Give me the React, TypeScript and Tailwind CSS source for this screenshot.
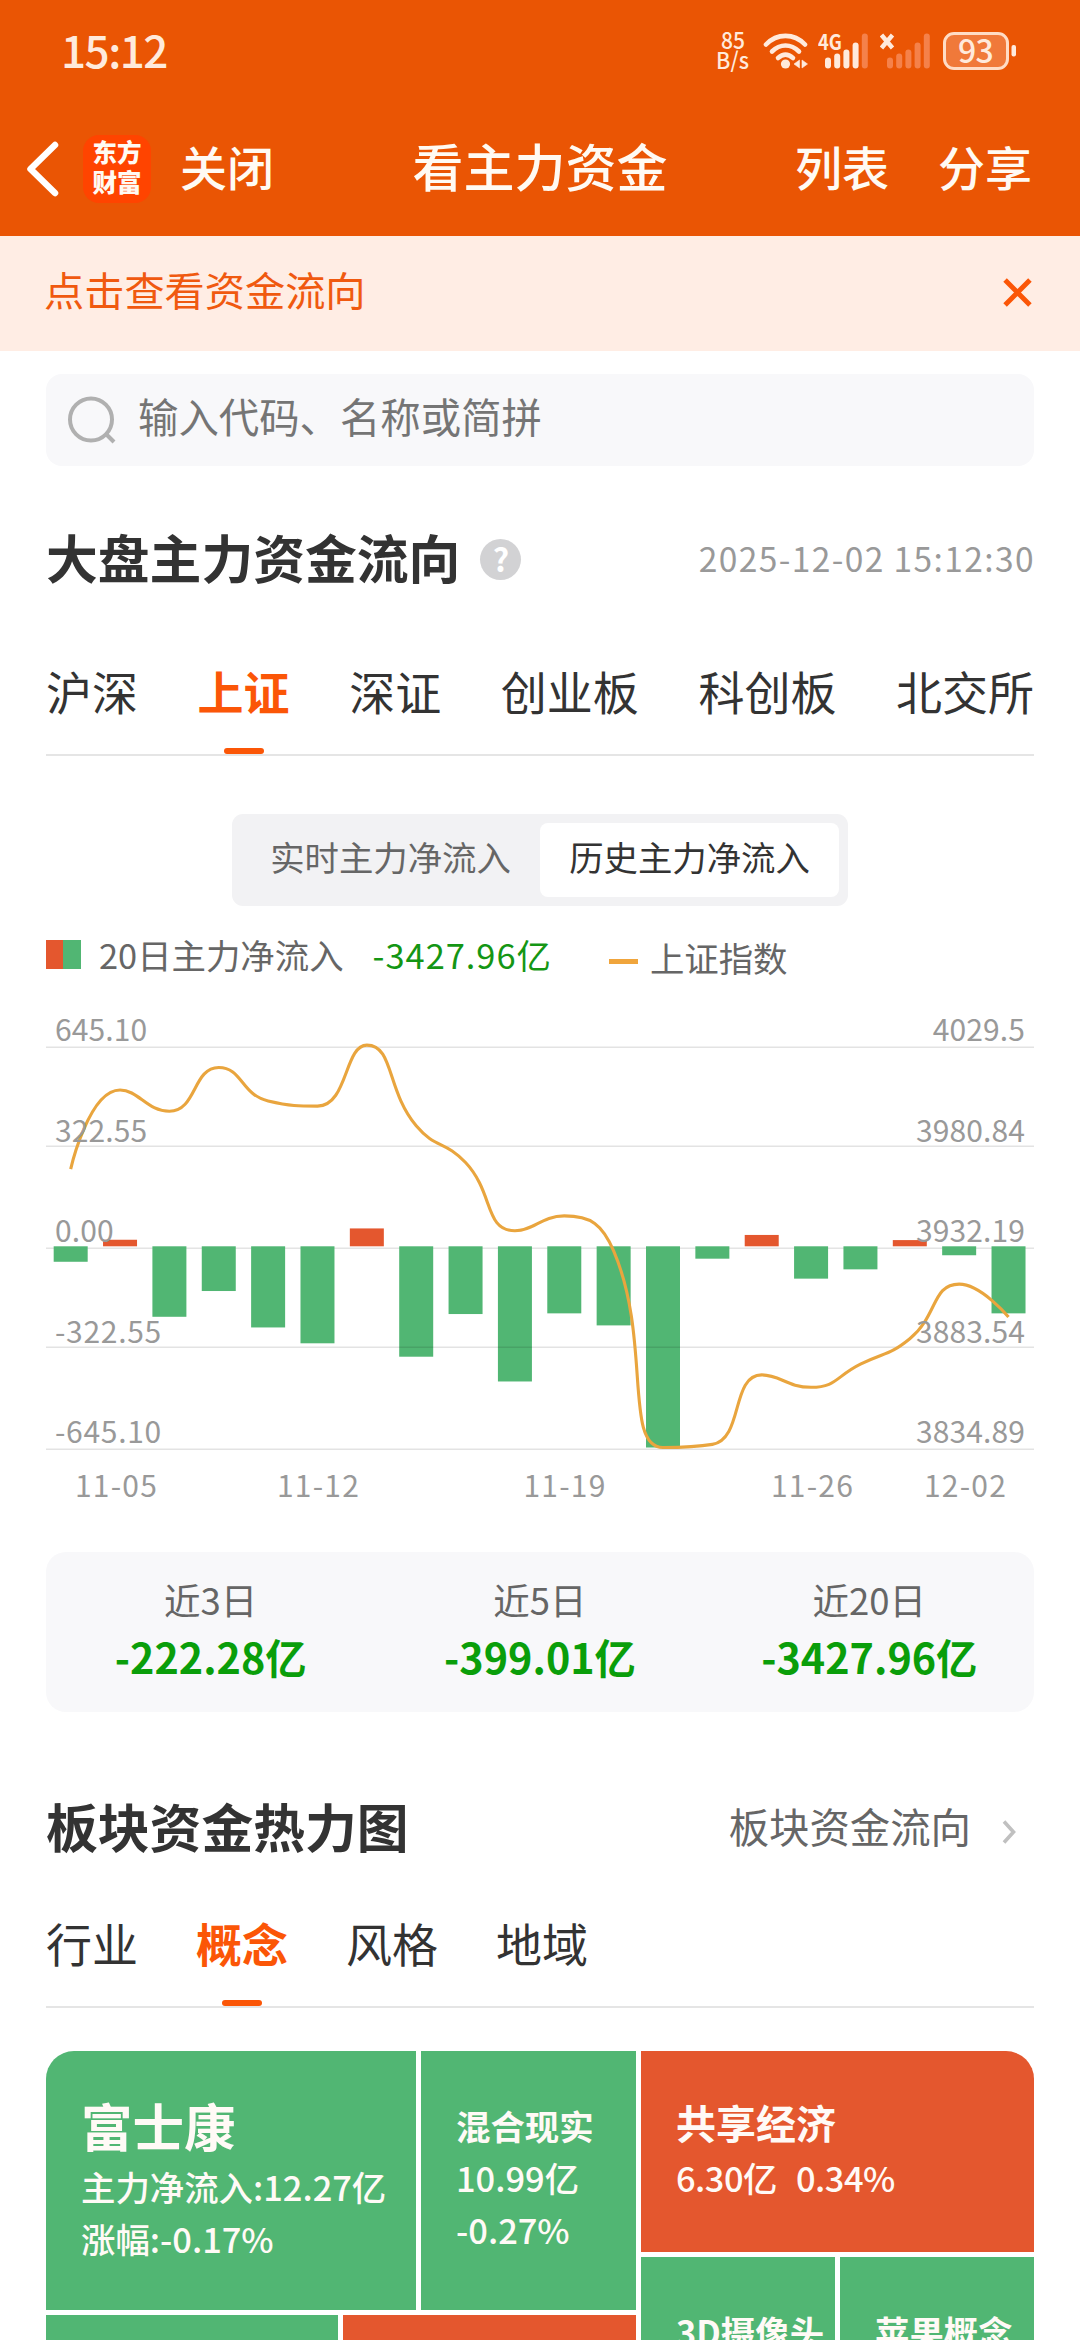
import * as React from 'react';
import { clsx } from 'clsx';

const MARKET_TABS = ['沪深', '上证', '深证', '创业板', '科创板', '北交所'];
const SECTOR_TABS = ['行业', '概念', '风格', '地域'];

const SUMMARY = [
  { label: '近3日', value: '-222.28亿' },
  { label: '近5日', value: '-399.01亿' },
  { label: '近20日', value: '-3427.96亿' },
];

// Daily main-force net inflow (亿) and index close, oldest first.
const INFLOW = [
  -49.6, 21, -226, -143.4, -260.2, -311, 57.3, -354, -217.2, -433.4, -215,
  -253.6, -645.1, -39.7, 36.4, -103.7, -73.9, 19.9, -28.7, -215,
];
const INDEX = [
  3969.5, 4007.8, 3997.5, 4018.7, 4002.5, 4000, 4029.5, 3990.5, 3972.7, 3939.7,
  3946.9, 3930, 3834.9, 3836.4, 3870, 3864, 3875.2, 3887.5, 3913.9, 3898,
];

const INFLOW_MAX = 645.1;
const INDEX_MAX = 4029.5;
const INDEX_MIN = 3834.89;

const GRID = [
  { y: 67, labelY: 61, left: '645.10', right: '4029.5' },
  { y: 166, labelY: 162, left: '322.55', right: '3980.84' },
  { y: 268, labelY: 262, left: '0.00', right: '3932.19' },
  { y: 367, labelY: 363, left: '-322.55', right: '3883.54' },
  { y: 469, labelY: 463, left: '-645.10', right: '3834.89' },
];
const DATES = [
  { x: 70.5, text: '11-05' },
  { x: 272.5, text: '11-12' },
  { x: 519, text: '11-19' },
  { x: 766.5, text: '11-26' },
  { x: 919.5, text: '12-02' },
];

const STEP = 49.36;
const BAR_WIDTH = 34;
const ZERO_Y = 266.3;
const HALF = 201.2;

type Point = [number, number];

const clamp = (v: number, a: number, b: number) =>
  Math.max(Math.min(v, Math.max(a, b)), Math.min(a, b));

// Smooths the polyline without overshooting either neighbour.
function smoothPath(points: Point[], smooth = 0.5) {
  let d = `M${points[0][0]} ${points[0][1]}`;
  let cp0: Point = points[0];
  for (let i = 1; i < points.length; i++) {
    const [px, py] = points[i - 1];
    const [x, y] = points[i];
    let cp1: Point = [x, y];
    let nextCp: Point = [x, y];
    if (i < points.length - 1) {
      const [nx, ny] = points[i + 1];
      const lenPrev = Math.hypot(x - px, y - py);
      const lenNext = Math.hypot(nx - x, ny - y);
      const ratio = lenNext / (lenNext + lenPrev);
      const ax = clamp(x + (nx - px) * smooth * ratio, nx, x);
      const ay = clamp(y + (ny - py) * smooth * ratio, ny, y);
      cp1 = [
        clamp(x - ((ax - x) * lenPrev) / lenNext, px, x),
        clamp(y - ((ay - y) * lenPrev) / lenNext, py, y),
      ];
      nextCp = [
        x + ((x - cp1[0]) * lenNext) / lenPrev,
        y + ((y - cp1[1]) * lenNext) / lenPrev,
      ];
    }
    d += `C${cp0[0]} ${cp0[1]} ${cp1[0]} ${cp1[1]} ${x} ${y}`;
    cp0 = nextCp;
  }
  return d;
}

function FlowChart() {
  const points = INDEX.map((v, i): Point => [
    STEP * (i + 0.5),
    ZERO_Y - HALF + ((INDEX_MAX - v) / (INDEX_MAX - INDEX_MIN)) * HALF * 2,
  ]);

  return (
    <svg width="988" height="540" viewBox="0 0 988 540" className="block">
      <rect x="0" y="267.5" width="988" height="1.5" fill="#e4e4e4" />
      {INFLOW.map((v, i) => {
        const h = (Math.abs(v) / INFLOW_MAX) * HALF;
        return (
          <rect
            key={i}
            x={STEP * (i + 0.5) - BAR_WIDTH / 2}
            y={v < 0 ? ZERO_Y : ZERO_Y - h}
            width={BAR_WIDTH}
            height={h}
            fill={v < 0 ? '#51b673' : '#e4572e'}
          />
        );
      })}
      {GRID.filter((g) => g.y !== 268).map((g) => (
        <rect key={g.y} x="0" y={g.y - 0.5} width="988" height="1.5" fill="#000" fillOpacity="0.11" />
      ))}
      <path d={smoothPath(points)} fill="none" stroke="#e9a53e" strokeWidth="3.1" strokeLinejoin="round" />
      <g fontSize="30" fill="#999">
        {GRID.map((g) => (
          <React.Fragment key={g.y}>
            <text x="9" y={g.labelY} letterSpacing={g.left.startsWith('-') ? 0.7 : 0.1}>
              {g.left}
            </text>
            <text x="979" y={g.labelY} letterSpacing="0.1" textAnchor="end">
              {g.right}
            </text>
          </React.Fragment>
        ))}
        {DATES.map((t) => (
          <text key={t.text} x={t.x} y="517" letterSpacing="1.2" textAnchor="middle">
            {t.text}
          </text>
        ))}
      </g>
    </svg>
  );
}

function SignalBars({ active }: { active: number }) {
  const heights = [11, 15, 19, 26, 35];
  return (
    <>
      {heights.map((h, i) => (
        <rect
          key={h}
          x={7 + i * 9.2}
          y={36.5 - h}
          width="6"
          height={h}
          rx="3"
          fill={i < active ? '#ffeadc' : '#f5814a'}
        />
      ))}
    </>
  );
}

function StatusBar() {
  return (
    <div className="flex h-[101px] items-center justify-between pr-[63px] pl-[61px] text-[#ffeadc]">
      <span className="pb-1 text-[44px] leading-none font-medium tracking-[-1.5px]">15:12</span>
      <div className="flex items-center">
        <svg width="34" height="42" viewBox="0 0 34 42" fill="#ffeadc" fontWeight="500">
          <text x="5" y="19" fontSize="23" textLength="24" lengthAdjust="spacingAndGlyphs">
            85
          </text>
          <text x="0" y="38.500" fontSize="23" textLength="33" lengthAdjust="spacingAndGlyphs">
            B/s
          </text>
        </svg>
        <svg width="46" height="38" viewBox="0 0 46 38" className="ml-[13px]" fill="none">
          <g stroke="#ffeadc" strokeWidth="4.6" strokeLinecap="round">
            <path d="M3 12.500C14 1 31 1 42 12.500" />
            <path d="M9 19.500C17 11.500 28 11.500 36 19.500" />
            <path d="M15 26C20 21.500 25 21.500 30 26" />
          </g>
          <circle cx="22.500" cy="32" r="4.600" fill="#ffeadc" />
          <path d="M36.500 28v8l-5.500-4zM39 28v8l5.500-4z" fill="#ffeadc" stroke="#ffeadc" strokeWidth="0.600" />
        </svg>
        <svg width="52" height="38" viewBox="0 0 52 38" className="ml-[9px]">
          <text x="0" y="18" fontSize="21" fontWeight="700" fill="#ffeadc" textLength="24" lengthAdjust="spacingAndGlyphs">
            4G
          </text>
          <SignalBars active={4} />
        </svg>
        <svg width="52" height="38" viewBox="0 0 52 38" className="ml-[10px]">
          <path d="m1.500 3 11 13M12.500 3l-11 13" stroke="#ffeadc" strokeWidth="4.400" />
          <SignalBars active={0} />
        </svg>
        <svg width="75" height="38" viewBox="0 0 75 38" className="ml-[10px]">
          <rect x="2.500" y="1.500" width="63" height="35" rx="9.500" fill="#f0793a" stroke="#ffdcc5" strokeWidth="3" />
          <rect x="69.500" y="13" width="4.500" height="11.500" rx="2" fill="#ffeadc" />
          <text x="33.500" y="30.500" fontSize="32" fontWeight="500" textAnchor="middle" fill="#ffeadc" letterSpacing="-0.800">
            93
          </text>
        </svg>
      </div>
    </div>
  );
}

function NavBar() {
  return (
    <div className="grid h-[135px] grid-cols-[1fr_auto_1fr] items-center text-[47px] leading-none font-medium text-[#fffaf3]">
      <div className="flex items-center pl-[26px]">
        <svg width="34" height="56" viewBox="0 0 34 56" fill="none">
          <path d="M29 4 4.500 28 29 52" stroke="#fff" strokeWidth="6.500" strokeLinecap="round" strokeLinejoin="round" />
        </svg>
        <div className="ml-[23px] flex size-[68px] flex-col items-center justify-center rounded-2xl bg-[#ff4400] pb-1 text-[24.500px] leading-[30px] font-black">
          <span>东方</span>
          <span>财富</span>
        </div>
        <span className="ml-[29px] pb-1.5">关闭</span>
      </div>
      <span className="pb-1.5 text-[51px]">看主力资金</span>
      <div className="flex justify-end gap-[49px] pr-[48px] pb-1.5">
        <span>列表</span>
        <span>分享</span>
      </div>
    </div>
  );
}

function Tabs({
  items,
  active,
  className,
}: {
  items: string[];
  active: string;
  className?: string;
}) {
  return (
    <div className={clsx('flex border-b-2 border-[#e5e5e5] text-[46px] text-[#333]', className)}>
      {items.map((item) => (
        <div key={item} className="flex flex-col items-center justify-between">
          <span className={clsx('leading-[60px]', item === active && 'font-bold text-[#fb5607]')}>
            {item}
          </span>
          {item === active && <span className="h-[6px] w-10 rounded-[3px] bg-[#fb5607]" />}
        </div>
      ))}
    </div>
  );
}

function Tile({
  name,
  up,
  className,
  nameClass,
  children,
}: {
  name?: string;
  up?: boolean;
  className?: string;
  nameClass?: string;
  children?: React.ReactNode;
}) {
  return (
    <div
      className={clsx(
        'overflow-hidden text-[34.400px] font-medium whitespace-nowrap text-[#fffaf6]',
        up ? 'bg-[#e4572e]' : 'bg-[#51b673]',
        className
      )}
    >
      {name && <div className={clsx('font-bold', nameClass)}>{name}</div>}
      {children}
    </div>
  );
}

function HeatMap() {
  return (
    <div className="mt-[43px] flex gap-[5px] overflow-hidden rounded-t-[28px]">
      <div className="flex w-[590px] flex-col gap-[5px]">
        <div className="flex h-[259px] gap-[5px]">
          <Tile name="富士康" className="w-[370px] pt-[38px] pl-[35px]" nameClass="text-[51.500px] leading-[71px]">
            <div className="leading-[52px]">主力净流入:12.27亿</div>
            <div className="leading-[52px]">涨幅:-0.17%</div>
          </Tile>
          <Tile name="混合现实" className="w-[215px] pt-[49px] pl-[35px]" nameClass="leading-[51px]">
            <div className="leading-[52px]">10.99亿</div>
            <div className="leading-[52px]">-0.27%</div>
          </Tile>
        </div>
        <div className="flex h-[120px] gap-[5px]">
          <Tile className="w-[292px]" />
          <Tile up className="w-[293px]" />
        </div>
      </div>
      <div className="flex w-[393px] flex-col gap-[5px]">
        <Tile up name="共享经济" className="h-[201px] pt-[43px] pl-[35px]" nameClass="text-[40px] leading-[57px]">
          <div className="flex gap-[19px] leading-[52px] tracking-[-0.5px]">
            <span>6.30亿</span>
            <span>0.34%</span>
          </div>
        </Tile>
        <div className="flex h-[178px] gap-[5px]">
          <Tile name="3D摄像头" className="w-[194px] pt-[48px] pl-[35px]" nameClass="leading-[52px]" />
          <Tile name="苹果概念" className="w-[194px] pt-[48px] pl-[35px]" nameClass="leading-[52px]" />
        </div>
      </div>
    </div>
  );
}

export default function App() {
  return (
    <div
      lang="zh-CN"
      className="h-[2340px] w-[1080px] overflow-hidden bg-white font-['Noto_Sans_CJK_SC',sans-serif] text-[#333]"
    >
      <header className="bg-[#ea5504]">
        <StatusBar />
        <NavBar />
      </header>

      <div className="flex h-[115px] items-center justify-between bg-[#ffede4] pr-[48px] pl-[44px]">
        <span className="pb-2 text-[40.200px] leading-none text-[#f0590f]">点击查看资金流向</span>
        <svg width="29" height="29" viewBox="0 0 28 28" className="mb-[3px]">
          <path d="m2 2 24 24M26 2 2 26" stroke="#fb5607" strokeWidth="4.800" />
        </svg>
      </div>

      <main className="px-[46px]">
        <div className="mt-[23px] flex h-[92px] items-center rounded-2xl bg-[#f8f8fa] pl-[22px]">
          <svg width="48" height="48" viewBox="0 0 48 48" fill="none" stroke="#b0b0b0" strokeWidth="4">
            <circle cx="23" cy="23.500" r="21" />
            <path d="m38 38 8 8" />
          </svg>
          <span className="ml-[22px] pb-2 text-[40.400px] leading-none text-[#757575]">
            输入代码、名称或简拼
          </span>
        </div>

        <div className="mt-[48px] flex h-[92px] items-center">
          <h2 className="pb-1.5 text-[51.800px] leading-none font-bold">大盘主力资金流向</h2>
          <span className="mb-0.5 ml-[20px] flex size-[41px] items-center justify-center rounded-full bg-[#d2d2d4] pb-0.5 text-[32px] leading-none font-bold text-white">
            ?
          </span>
          <span className="mr-[-1px] ml-auto pb-1 text-[33.500px] leading-none tracking-[1.400px] text-[#999]">
            2025-12-02 15:12:30
          </span>
        </div>

        <Tabs items={MARKET_TABS} active="上证" className="mt-[54px] h-[96px] justify-between" />

        <div className="mx-auto mt-[58px] flex h-[92px] w-[616px] rounded-[11px] bg-[#f2f2f4] p-[9px] text-[34.400px] leading-[67px]">
          <div className="flex-1 text-center text-[#666]">实时主力净流入</div>
          <div className="w-[299px] rounded-lg bg-white text-center">历史主力净流入</div>
        </div>

        <div className="mt-[24px] flex h-[50px] items-center text-[34.400px] leading-none text-[#666]">
          <span className="mb-0.5 h-[29px] w-[17px] bg-[#e4572e]" />
          <span className="mb-0.5 h-[29px] w-[18px] bg-[#51b673]" />
          <span className="ml-[18px] pb-0.5">20日主力净流入</span>
          <span className="ml-[29px] pb-0.5 tracking-[1px] text-[#149614]">-3427.96亿</span>
          <span className="mt-[12px] ml-[57px] h-[5px] w-[29px] bg-[#f0a53c]" />
          <span className="ml-[12px] pt-1">上证指数</span>
        </div>

        <FlowChart />

        <div className="mt-[32px] grid h-[160px] grid-cols-3 rounded-[20px] bg-[#f8f8fa] pt-[19px] text-center">
          {SUMMARY.map((s) => (
            <div key={s.label}>
              <div className="text-[36.500px] leading-[57px] text-[#666]">{s.label}</div>
              <div className="text-[41.300px] leading-[57px] font-bold text-[#0a9e0a]">{s.value}</div>
            </div>
          ))}
        </div>

        <div className="mt-[69px] flex h-[92px] items-center">
          <h2 className="pb-[3px] text-[51.800px] leading-none font-bold">板块资金热力图</h2>
          <span className="ml-auto pb-0.5 text-[40.400px] leading-none text-[#666]">板块资金流向</span>
          <svg width="16" height="26" viewBox="0 0 16 26" fill="none" className="mt-[10px] mr-[17px] ml-[30px]">
            <path d="m3 2.500 9.500 10.500L3 23.500" stroke="#c0c0c0" strokeWidth="3.600" />
          </svg>
        </div>

        <Tabs items={SECTOR_TABS} active="概念" className="mt-[39px] h-[96px] gap-[58px]" />

        <HeatMap />
      </main>
    </div>
  );
}
